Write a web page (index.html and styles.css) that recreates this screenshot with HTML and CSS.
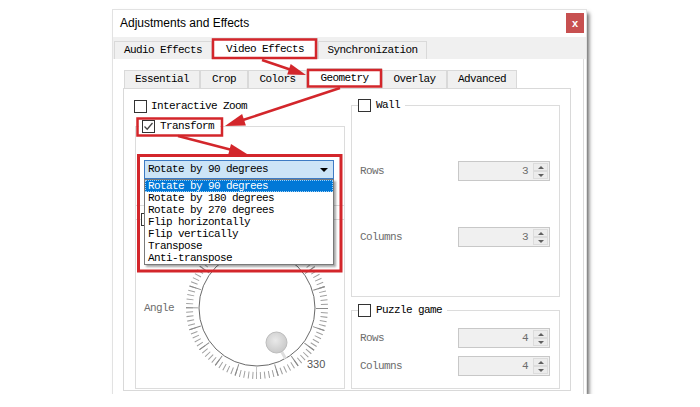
FILE: index.html
```html
<!DOCTYPE html>
<html lang="en">
<head>
<meta charset="UTF-8">
<meta name="viewport" content="width=device-width, initial-scale=1.0">
<title>Adjustments and Effects</title>
<link rel="stylesheet" href="styles.css">
</head>
<body>
<div class="window">
    <div class="titlebar">
        <span class="title">Adjustments and Effects</span>
        <span class="close">x</span>
    </div>

    <div class="tabbar">
        <div class="tab tab-audio">Audio Effects</div>
        <div class="tab tab-video active">Video Effects</div>
        <div class="tab tab-sync">Synchronization</div>
    </div>

    <div class="page">
        <div class="subtabs">
            <div class="subtab st-essential">Essential</div>
            <div class="subtab st-crop">Crop</div>
            <div class="subtab st-colors">Colors</div>
            <div class="subtab st-geometry active">Geometry</div>
            <div class="subtab st-overlay">Overlay</div>
            <div class="subtab st-advanced">Advanced</div>
        </div>

        <div class="subpanel">
            <div class="col-left">
                <div class="check zoom-check"><span class="box"></span>Interactive Zoom</div>

                <fieldset class="group transform">
                    <legend><span class="box"><svg width="11" height="11" viewBox="0 0 11 11"><polyline points="1.5,5.5 4.2,8.2 9.5,2" fill="none" stroke="#444" stroke-width="1.3"/></svg></span>Transform</legend>

                    <div class="combo">
                        <span>Rotate by 90 degrees</span>
                        <span class="caret"></span>
                        <ul class="popup">
                            <li class="selected">Rotate by 90 degrees</li>
                            <li>Rotate by 180 degrees</li>
                            <li>Rotate by 270 degrees</li>
                            <li>Flip horizontally</li>
                            <li>Flip vertically</li>
                            <li>Transpose</li>
                            <li>Anti-transpose</li>
                        </ul>
                    </div>

                    <div class="sep"></div>

                    <fieldset class="rotate">
                        <legend><span class="box"></span></legend>
                        <div class="dial-row">
                            <span class="dim angle-label">Angle</span>
                            <svg class="dial" width="150" height="150" viewBox="0 0 150 150">
                                <defs>
                                    <radialGradient id="knobFill" cx="45%" cy="40%" r="60%">
                                        <stop offset="0" stop-color="#e9e9e9"/>
                                        <stop offset="1" stop-color="#c9c9c9"/>
                                    </radialGradient>
                                </defs>
                                <!-- notches: 100 small, every fifth one long -->
                                <circle cx="75" cy="75" r="67.5" fill="none" stroke="#a0a0a0" stroke-width="7"
                                        stroke-dasharray="1 3.2412" stroke-dashoffset="0.5" transform="rotate(90 75 75)"/>
                                <circle cx="75" cy="75" r="65" fill="none" stroke="#8a8a8a" stroke-width="12"
                                        stroke-dasharray="1 19.4204" stroke-dashoffset="0.5" transform="rotate(90 75 75)"/>
                                <circle cx="75" cy="75" r="58" fill="#fff" stroke="#6a6a6a" stroke-width="1"/>
                                <line x1="94.5" y1="109.5" x2="103.5" y2="125.5" stroke="#dedede" stroke-width="3"/>
                                <circle cx="94.5" cy="109.5" r="10.5" fill="url(#knobFill)" stroke="#bcbcbc"/>
                                <text x="125" y="135" class="dial-value">330</text>
                            </svg>
                        </div>
                    </fieldset>
                </fieldset>
            </div>

            <div class="col-right">
                <fieldset class="group wall">
                    <legend><span class="box"></span>Wall</legend>
                    <div class="field wall-rows">
                        <span class="dim">Rows</span>
                        <div class="spin"><span class="val">3</span><span class="btns"><i class="up"></i><i class="down"></i></span></div>
                    </div>
                    <div class="field wall-cols">
                        <span class="dim">Columns</span>
                        <div class="spin"><span class="val">3</span><span class="btns"><i class="up"></i><i class="down"></i></span></div>
                    </div>
                </fieldset>

                <fieldset class="group puzzle">
                    <legend><span class="box"></span>Puzzle game</legend>
                    <div class="field puzzle-rows">
                        <span class="dim">Rows</span>
                        <div class="spin"><span class="val">4</span><span class="btns"><i class="up"></i><i class="down"></i></span></div>
                    </div>
                    <div class="field puzzle-cols">
                        <span class="dim">Columns</span>
                        <div class="spin"><span class="val">4</span><span class="btns"><i class="up"></i><i class="down"></i></span></div>
                    </div>
                </fieldset>
            </div>
        </div>
    </div>
</div>

<!-- red callouts drawn on top of the dialog -->
<svg class="marks" width="700" height="407" viewBox="0 0 700 407">
    <g fill="none" stroke="#d3262b" stroke-width="2.5">
        <rect x="213" y="39.5" width="103" height="18.5"/>
        <rect x="308" y="70" width="73" height="16.5"/>
        <rect x="137.5" y="118.5" width="84.5" height="17"/>
        <rect x="138.5" y="155.5" width="202.5" height="115.5" stroke-width="3"/>
        <line x1="262" y1="60" x2="290" y2="69.5"/>
        <line x1="340" y1="88" x2="243" y2="120"/>
        <line x1="178" y1="136" x2="231" y2="149.8"/>
    </g>
    <g fill="#d3262b">
        <polygon points="306,75 287.2,74.4 290.7,64"/>
        <polygon points="225,126 242.1,114 245.9,125.4"/>
        <polygon points="247,154 228.2,154.8 231,144.1"/>
    </g>
</svg>
</body>
</html>
```

FILE: styles.css
```css
* {
    margin: 0;
    padding: 0;
    box-sizing: border-box;
}

body {
    background: #fff;
    color: #000;
    font-family: "Liberation Mono", monospace;
    font-size: 11px;
    letter-spacing: -0.6px;
    line-height: 13px;
}

.window {
    position: relative;
    width: 473px;
    height: 384px;
    margin: 10px 0 0 113px;
    background: #fff;
    box-shadow: 0 0 0 1px #e2e2e2, 3px 3px 4px rgba(0, 0, 0, 0.6);
}

/* title bar */
.titlebar {
    height: 27px;
    display: flex;
    justify-content: space-between;
    align-items: flex-start;
}

.title {
    font-family: "Liberation Sans", Arial, sans-serif;
    font-size: 12px;
    letter-spacing: 0;
    line-height: 15px;
    padding: 6px 0 0 7px;
}

.close {
    width: 18px;
    height: 20px;
    margin: 3px 2px 0 0;
    background: #c75050;
    color: #fff;
    font: bold 11px "Liberation Sans", Arial, sans-serif;
    letter-spacing: 0;
    display: flex;
    align-items: center;
    justify-content: center;
}

/* top level tabs */
.tabbar {
    height: 22px;
    background: #f0f0f0;
    display: flex;
    align-items: flex-end;
    padding-left: 1px;
}

.tab,
.subtab {
    height: 18px;
    line-height: 17px;
    text-align: center;
    background: #f0f0f0;
    border: 1px solid #d9d9d9;
    border-bottom: none;
}

.tab.active {
    height: 21px;
    line-height: 20px;
    background: #fff;
}

.tab-audio { width: 98px; }
.tab-video { width: 106px; }
.tab-sync { width: 109px; }

.page {
    height: 335px;
    padding: 11px 0 0 10px;
    border-right: 1px solid #dcdcdc;
    margin-right: 2px;
}

/* effect sub tabs */
.subtabs {
    height: 18px;
    display: flex;
    align-items: flex-end;
    margin-left: 1px;
}

.subtab.active {
    height: 20px;
    line-height: 19px;
    background: #fff;
}

.st-essential { width: 76px; }
.st-crop { width: 48px; }
.st-colors { width: 59px; }
.st-geometry { width: 75px; }
.st-overlay { width: 65px; }
.st-advanced { width: 70px; }

.subpanel {
    width: 448px;
    height: 303px;
    border: 1px solid #d9d9d9;
    display: flex;
}

/* checkboxes and group boxes */
.check {
    display: flex;
    align-items: center;
    gap: 4px;
    height: 13px;
}

.box {
    display: inline-flex;
    align-items: center;
    justify-content: center;
    width: 13px;
    height: 13px;
    border: 1px solid #333;
    background: #fff;
    flex: none;
}

.group {
    border: 1px solid #dcdcdc;
    min-width: 0;
}

legend {
    display: flex;
    align-items: center;
    gap: 5px;
    height: 13px;
    line-height: 13px;
}

.dim {
    color: #6d6d6d;
}

/* left column: transform */
.col-left {
    width: 221px;
    padding-top: 11px;
}

.zoom-check {
    margin-left: 10px;
}

.transform {
    width: 210px;
    height: 269px;
    margin: 7px 0 0 11px;
    padding: 0 0 0 8px;
}

.transform > legend {
    margin-left: -5px;
    padding: 0 6px 0 3px;
}

.combo {
    position: relative;
    width: 190px;
    height: 19px;
    margin-top: 27px;
    padding-left: 3px;
    line-height: 17px;
    background: #cce4f7;
    border: 1px solid #3d7bc4;
    display: flex;
    justify-content: space-between;
}

.caret {
    width: 0;
    height: 0;
    margin: 7px 5px 0 0;
    border-left: 4px solid transparent;
    border-right: 4px solid transparent;
    border-top: 4px solid #000;
}

.popup {
    position: absolute;
    top: 18px;
    left: -1px;
    width: 190px;
    list-style: none;
    background: #fff;
    border: 1px solid #7a7a7a;
    box-shadow: 2px 2px 2px rgba(0, 0, 0, 0.35);
    z-index: 2;
}

.popup li {
    height: 12px;
    line-height: 12px;
    padding-left: 3px;
}

.popup li.selected {
    background: #0078d7;
    color: #fff;
    outline: 1px dotted #9fd0f5;
    outline-offset: -1px;
}

.sep {
    margin: 26px 0 0 -8px;
    border-top: 1px solid #dcdcdc;
}

.rotate {
    border: none;
    border-top: 1px solid #dcdcdc;
    margin: 7px 0 0 -8px;
    padding-left: 8px;
    min-width: 0;
}

.rotate > legend {
    margin-left: -3px;
}

.dial-row {
    display: flex;
    align-items: center;
    margin-top: 7px;
}

.angle-label {
    width: 38px;
}

.dial {
    display: block;
}

.dial-value {
    font-family: "Liberation Sans", Arial, sans-serif;
    font-size: 11px;
    letter-spacing: 0;
    fill: #555;
}

/* right column: wall and puzzle */
.col-right {
    width: 225px;
    padding-top: 10px;
}

.wall,
.puzzle {
    width: 209px;
    margin-left: 6px;
    padding: 0 9px 0 8px;
}

.wall {
    height: 198px;
}

.puzzle {
    height: 85px;
    margin-top: 7px;
}

.wall > legend,
.puzzle > legend {
    margin-left: -2px;
    padding-right: 5px;
}

.field {
    display: flex;
    align-items: center;
    justify-content: space-between;
    height: 20px;
}

.wall-rows { margin-top: 49px; }
.wall-cols { margin-top: 46px; }
.puzzle-rows { margin-top: 11px; }
.puzzle-cols { margin-top: 8px; }

.spin {
    width: 92px;
    height: 20px;
    display: flex;
    background: #f0f0f0;
    border: 1px solid #c8c8c8;
}

.spin .val {
    flex: 1;
    text-align: right;
    padding-right: 5px;
    line-height: 18px;
    color: #6d6d6d;
}

.spin .btns {
    width: 15px;
    margin: 1px 1px 1px 0;
    display: flex;
    flex-direction: column;
}

.spin i {
    flex: 1;
    display: flex;
    align-items: center;
    justify-content: center;
    border: 1px solid #dcdcdc;
    background: #ececec;
}

.spin i::after {
    content: "";
    border-left: 3px solid transparent;
    border-right: 3px solid transparent;
}

.spin i.up::after {
    border-bottom: 3px solid #606060;
}

.spin i.down::after {
    border-top: 3px solid #606060;
}

/* callout overlay */
.marks {
    position: absolute;
    top: 0;
    left: 0;
    pointer-events: none;
}
```
